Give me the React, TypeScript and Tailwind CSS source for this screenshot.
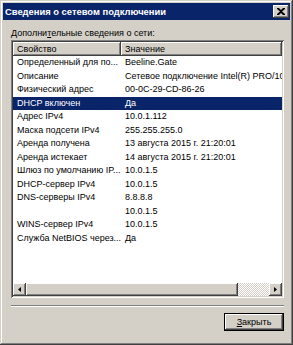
const rows: [string, string][] = [
  ['Определенный для по...', 'Beeline.Gate'],
  ['Описание', 'Сетевое подключение Intel(R) PRO/1000 MT'],
  ['Физический адрес', '00-0C-29-CD-86-26'],
  ['DHCP включен', 'Да'],
  ['Адрес IPv4', '10.0.1.112'],
  ['Маска подсети IPv4', '255.255.255.0'],
  ['Аренда получена', '13 августа 2015 г. 21:20:01'],
  ['Аренда истекает', '14 августа 2015 г. 21:20:01'],
  ['Шлюз по умолчанию IP...', '10.0.1.5'],
  ['DHCP-сервер IPv4', '10.0.1.5'],
  ['DNS-серверы IPv4', '8.8.8.8'],
  ['', '10.0.1.5'],
  ['WINS-сервер IPv4', '10.0.1.5'],
  ['Служба NetBIOS через...', 'Да'],
];

const raised =
  'bg-[#d4d0c8] shadow-[inset_-1px_-1px_#404040,inset_1px_1px_#ffffff,inset_-2px_-2px_#808080]';

export default function App() {
  return (
    <div className="w-[293px] h-[345px] bg-[#d4d0c8] font-['Liberation_Sans',Arial,sans-serif] text-[9px] text-black">
      {/* window frame */}
      <div className="w-full h-full p-[3px] shadow-[inset_-1px_-1px_#404040,inset_1px_1px_#d4d0c8,inset_-2px_-2px_#808080,inset_2px_2px_#ffffff] flex flex-col">
        {/* title bar */}
        <div className="h-[17px] bg-[#0a246a] flex items-center justify-between pl-[2px] pr-[1px]">
          <span className="text-white font-bold text-[9.4px] leading-none">Сведения о сетевом подключении</span>
          <div className={`w-[16px] h-[13px] ${raised} flex items-center justify-center`}>
            <svg width="8" height="7" viewBox="0 0 8 7">
              <path d="M0 0h2l2 2 2-2h2v1L5 3.5 8 6v1H6L4 5 2 7H0V6l3-2.5L0 1z" fill="#000" />
            </svg>
          </div>
        </div>

        <div className="flex-1 flex flex-col pl-[8px] pr-[6px]">
          <div className="mt-[7px] h-[13px] leading-[13px]">
            Дополни<span className="underline">т</span>ельные сведения о сети:
          </div>

          {/* list view */}
          <div className="h-[258px] bg-white p-[2px] shadow-[inset_1px_1px_#808080,inset_-1px_-1px_#ffffff,inset_2px_2px_#404040,inset_-2px_-2px_#d4d0c8] flex flex-col overflow-hidden">
            <div className="h-[14px] flex shrink-0">
              <div className={`w-[108px] ${raised} pl-[4px] leading-[14px]`}>Свойство</div>
              <div className={`flex-1 ${raised} pl-[4px] leading-[14px]`}>Значение</div>
            </div>
            <div className="flex-1 overflow-hidden">
              {rows.map(([k, v], i) => (
                <div
                  key={i}
                  className={`h-[13.5px] flex items-center whitespace-nowrap ${
                    i === 3 ? 'bg-[#0a246a] text-white' : ''
                  }`}
                >
                  <span className="w-[108px] pl-[4px] shrink-0 overflow-hidden">{k}</span>
                  <span className="pl-[4px]">{v}</span>
                </div>
              ))}
            </div>
            {/* horizontal scrollbar */}
            <div className="h-[13px] flex shrink-0">
              <div className={`w-[13px] ${raised} flex items-center justify-center`}>
                <svg width="3" height="5" viewBox="0 0 3 5">
                  <path d="M3 0v5L0 2.5z" fill="#000" />
                </svg>
              </div>
              <div className={`w-[212px] ${raised}`} />
              <div className="flex-1 bg-[repeating-conic-gradient(#ffffff_0_25%,#d4d0c8_0_50%)] bg-[length:2px_2px]" />
              <div className={`w-[13px] ${raised} flex items-center justify-center`}>
                <svg width="3" height="5" viewBox="0 0 3 5">
                  <path d="M0 0v5l3-2.5z" fill="#000" />
                </svg>
              </div>
            </div>
          </div>

          {/* separator */}
          <div className="mt-[7px] h-[2px] border-t border-t-[#808080] border-b border-b-white" />

          <div className="mt-[6px] flex justify-end">
            <button className="w-[60px] h-[18px] border border-black bg-[#d4d0c8] shadow-[inset_-1px_-1px_#404040,inset_1px_1px_#ffffff,inset_-2px_-2px_#808080] text-[9px] leading-none">
              <span className="underline">З</span>акрыть
            </button>
          </div>
        </div>
      </div>
    </div>
  );
}
